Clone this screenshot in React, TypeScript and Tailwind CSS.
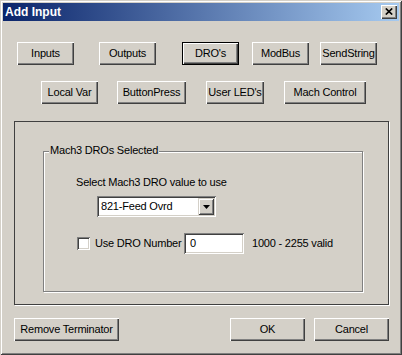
import React from "react";

const font = { fontFamily: '"Liberation Sans", Arial, sans-serif' };

function Btn({
  children,
  w,
  className = "",
  def = false,
}: {
  children: React.ReactNode;
  w: string;
  className?: string;
  def?: boolean;
}) {
  const base = def
    ? "border border-black shadow-[inset_1px_1px_0_#ffffff,inset_-1px_-1px_0_#404040,inset_-2px_-2px_0_#808080]"
    : "shadow-[inset_1px_1px_0_#ffffff,inset_-1px_-1px_0_#404040,inset_-2px_-2px_0_#808080]";
  return (
    <div
      className={`${w} h-[23px] flex items-center justify-center text-[11px] tracking-[-0.2px] text-black bg-[#d4d0c8] ${base} ${className}`}
    >
      {children}
    </div>
  );
}

const sunken =
  "shadow-[inset_1px_1px_0_#808080,inset_-1px_-1px_0_#ffffff,inset_2px_2px_0_#404040,inset_-2px_-2px_0_#d4d0c8]";

export default function App() {
  return (
    <div
      style={font}
      className="w-[402px] h-[355px] bg-[#d4d0c8] flex flex-col shadow-[inset_1px_1px_0_#d4d0c8,inset_-1px_-1px_0_#404040,inset_2px_2px_0_#ffffff,inset_-2px_-2px_0_#808080]"
    >
      {/* Title bar */}
      <div className="mx-[3px] mt-[3px] h-[18px] flex items-center justify-between pl-[2px] pr-[2px] bg-[linear-gradient(to_right,#0a246a,#a6caf0)]">
        <span className="text-white font-bold text-[12px] leading-none">Add Input</span>
        <div className="w-[16px] h-[14px] bg-[#d4d0c8] flex items-center justify-center shadow-[inset_1px_1px_0_#ffffff,inset_-1px_-1px_0_#404040,inset_-2px_-2px_0_#808080]">
          <svg width="8" height="7" viewBox="0 0 8 7" className="mb-[1px]">
            <path d="M0.8 0.5 L7.2 6.5 M7.2 0.5 L0.8 6.5" stroke="#000" strokeWidth="1.7" fill="none" />
          </svg>
        </div>
      </div>

      {/* Row 1 */}
      <div className="flex mt-[21px]">
        <Btn w="w-[57px]" className="ml-[17px]">Inputs</Btn>
        <Btn w="w-[57px]" className="ml-[25px]">Outputs</Btn>
        <Btn w="w-[57px]" className="ml-[26px]" def>DRO's</Btn>
        <Btn w="w-[57px]" className="ml-[13px]">ModBus</Btn>
        <Btn w="w-[57px]" className="ml-[11px]">SendString</Btn>
      </div>

      {/* Row 2 */}
      <div className="flex mt-[16px]">
        <Btn w="w-[57px]" className="ml-[41px]">Local Var</Btn>
        <Btn w="w-[69px]" className="ml-[19px]">ButtonPress</Btn>
        <Btn w="w-[58px]" className="ml-[20px]">User LED's</Btn>
        <Btn w="w-[82px]" className="ml-[20px]">Mach Control</Btn>
      </div>

      {/* Outer frame */}
      <div className="mt-[17px] ml-[14px] w-[375px] h-[184px] border border-[#404040] shadow-[1px_1px_0_#ffffff] flex flex-col">
        {/* Group box */}
        <div className="relative mt-[29px] ml-[28px] w-[320px] h-[141px] border border-[#808080] shadow-[inset_1px_1px_0_#ffffff,1px_1px_0_#ffffff] flex flex-col">
          <span className="absolute left-[5px] top-[-8px] px-[1px] bg-[#d4d0c8] text-[11px] leading-[13px] tracking-[-0.2px] text-black">
            Mach3 DROs Selected
          </span>
          <div className="mt-[24px] ml-[32px] text-[11px] leading-[13px] tracking-[-0.2px] text-black">
            Select Mach3 DRO value to use
          </div>
          <div className={`mt-[7px] ml-[53px] w-[119px] h-[21px] bg-white flex items-center p-[2px] ${sunken}`}>
            <span className="flex-1 pl-[2px] text-[11px] tracking-[-0.2px] text-black leading-none">821-Feed Ovrd</span>
            <div className="w-[16px] h-[17px] bg-[#d4d0c8] flex items-center justify-center shadow-[inset_1px_1px_0_#d4d0c8,inset_-1px_-1px_0_#404040,inset_2px_2px_0_#ffffff,inset_-2px_-2px_0_#808080]">
              <svg width="7" height="4" viewBox="0 0 7 4">
                <path d="M0 0 H7 L3.5 4 Z" fill="#000" />
              </svg>
            </div>
          </div>
          <div className="mt-[16px] flex items-center h-[21px]">
            <div className={`ml-[33px] w-[13px] h-[13px] bg-white ${sunken}`} />
            <span className="ml-[5px] w-[89px] text-[11px] tracking-[-0.2px] text-black">Use DRO Number</span>
            <div className={`w-[60px] h-[21px] bg-white flex items-center pl-[6px] text-[11px] text-black ${sunken}`}>0</div>
            <span className="ml-[8px] text-[11px] tracking-[-0.2px] text-black">1000 - 2255 valid</span>
          </div>
        </div>
      </div>

      {/* Bottom row */}
      <div className="flex mt-[13px]">
        <Btn w="w-[105px]" className="ml-[14px]">Remove Terminator</Btn>
        <Btn w="w-[75px]" className="ml-[111px]">OK</Btn>
        <Btn w="w-[75px]" className="ml-[9px]">Cancel</Btn>
      </div>
    </div>
  );
}
